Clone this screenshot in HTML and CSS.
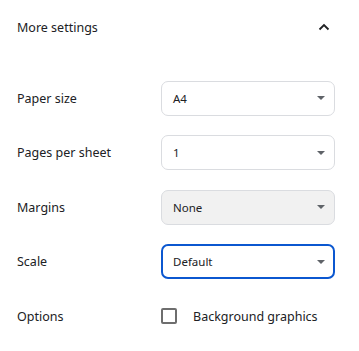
FILE: index.html
```html
<!DOCTYPE html>
<html lang="en">
<head>
  <meta charset="UTF-8"/>
  <meta name="viewport" content="width=device-width,initial-scale=1"/>
  <title>More settings</title>
  <link rel="stylesheet" href="styles.css">
</head>
<body>
  <div class="panel">
    <div class="header">
      <span>More settings</span>
      <svg class="chevron" width="12" height="8" viewBox="0 0 12 8">
        <path d="M1.5 6.5 L6 2 L10.5 6.5" fill="none" stroke="#202124" stroke-width="1.8"/>
      </svg>
    </div>

    <div class="rows">
      <div class="row">
        <label>Paper size</label>
        <div class="select">A4<span class="arrow"></span></div>
      </div>
      <div class="row">
        <label>Pages per sheet</label>
        <div class="select">1<span class="arrow"></span></div>
      </div>
      <div class="row">
        <label>Margins</label>
        <div class="select disabled">None<span class="arrow"></span></div>
      </div>
      <div class="row">
        <label>Scale</label>
        <div class="select focused">Default<span class="arrow"></span></div>
      </div>
      <div class="row">
        <label>Options</label>
        <div class="check">
          <span class="box"></span>
          <span>Background graphics</span>
        </div>
      </div>
    </div>
  </div>
</body>
</html>
```

FILE: styles.css
```css
:root {
  --text: #202124;
  --border: #dadce0;
  --accent: #0b57d0;
}
* { box-sizing: border-box; margin: 0; padding: 0 }
body {
  background: #fff;
  font-family: "Noto Sans", "Open Sans", sans-serif;
  font-size: 12.5px;
  color: var(--text);
}
.panel { width: 359px }
.header {
  height: 54px;
  padding: 0 29px 0 17px;
  display: flex;
  align-items: center;
  justify-content: space-between;
}
.rows { padding-top: 17px }
.row {
  height: 54.5px;
  display: grid;
  grid-template-columns: 144px 174px;
  align-items: center;
  padding-left: 17px;
}
.select {
  height: 35px;
  border: 1px solid var(--border);
  border-radius: 7px;
  padding: 0 9px 0 11px;
  display: flex;
  align-items: center;
  justify-content: space-between;
  font-size: 11.5px;
}
.select.disabled { background: #f1f1f1 }
.select.focused {
  border: 2px solid var(--accent);
  padding-left: 10px;
  padding-right: 8px;
}
.arrow {
  width: 0;
  height: 0;
  border-left: 4px solid transparent;
  border-right: 4px solid transparent;
  border-top: 4px solid #5f6368;
}
.check {
  display: flex;
  align-items: center;
  gap: 16px;
}
.box {
  width: 16px;
  height: 16px;
  border: 2px solid #6e6e6e;
  border-radius: 2px;
}
```
